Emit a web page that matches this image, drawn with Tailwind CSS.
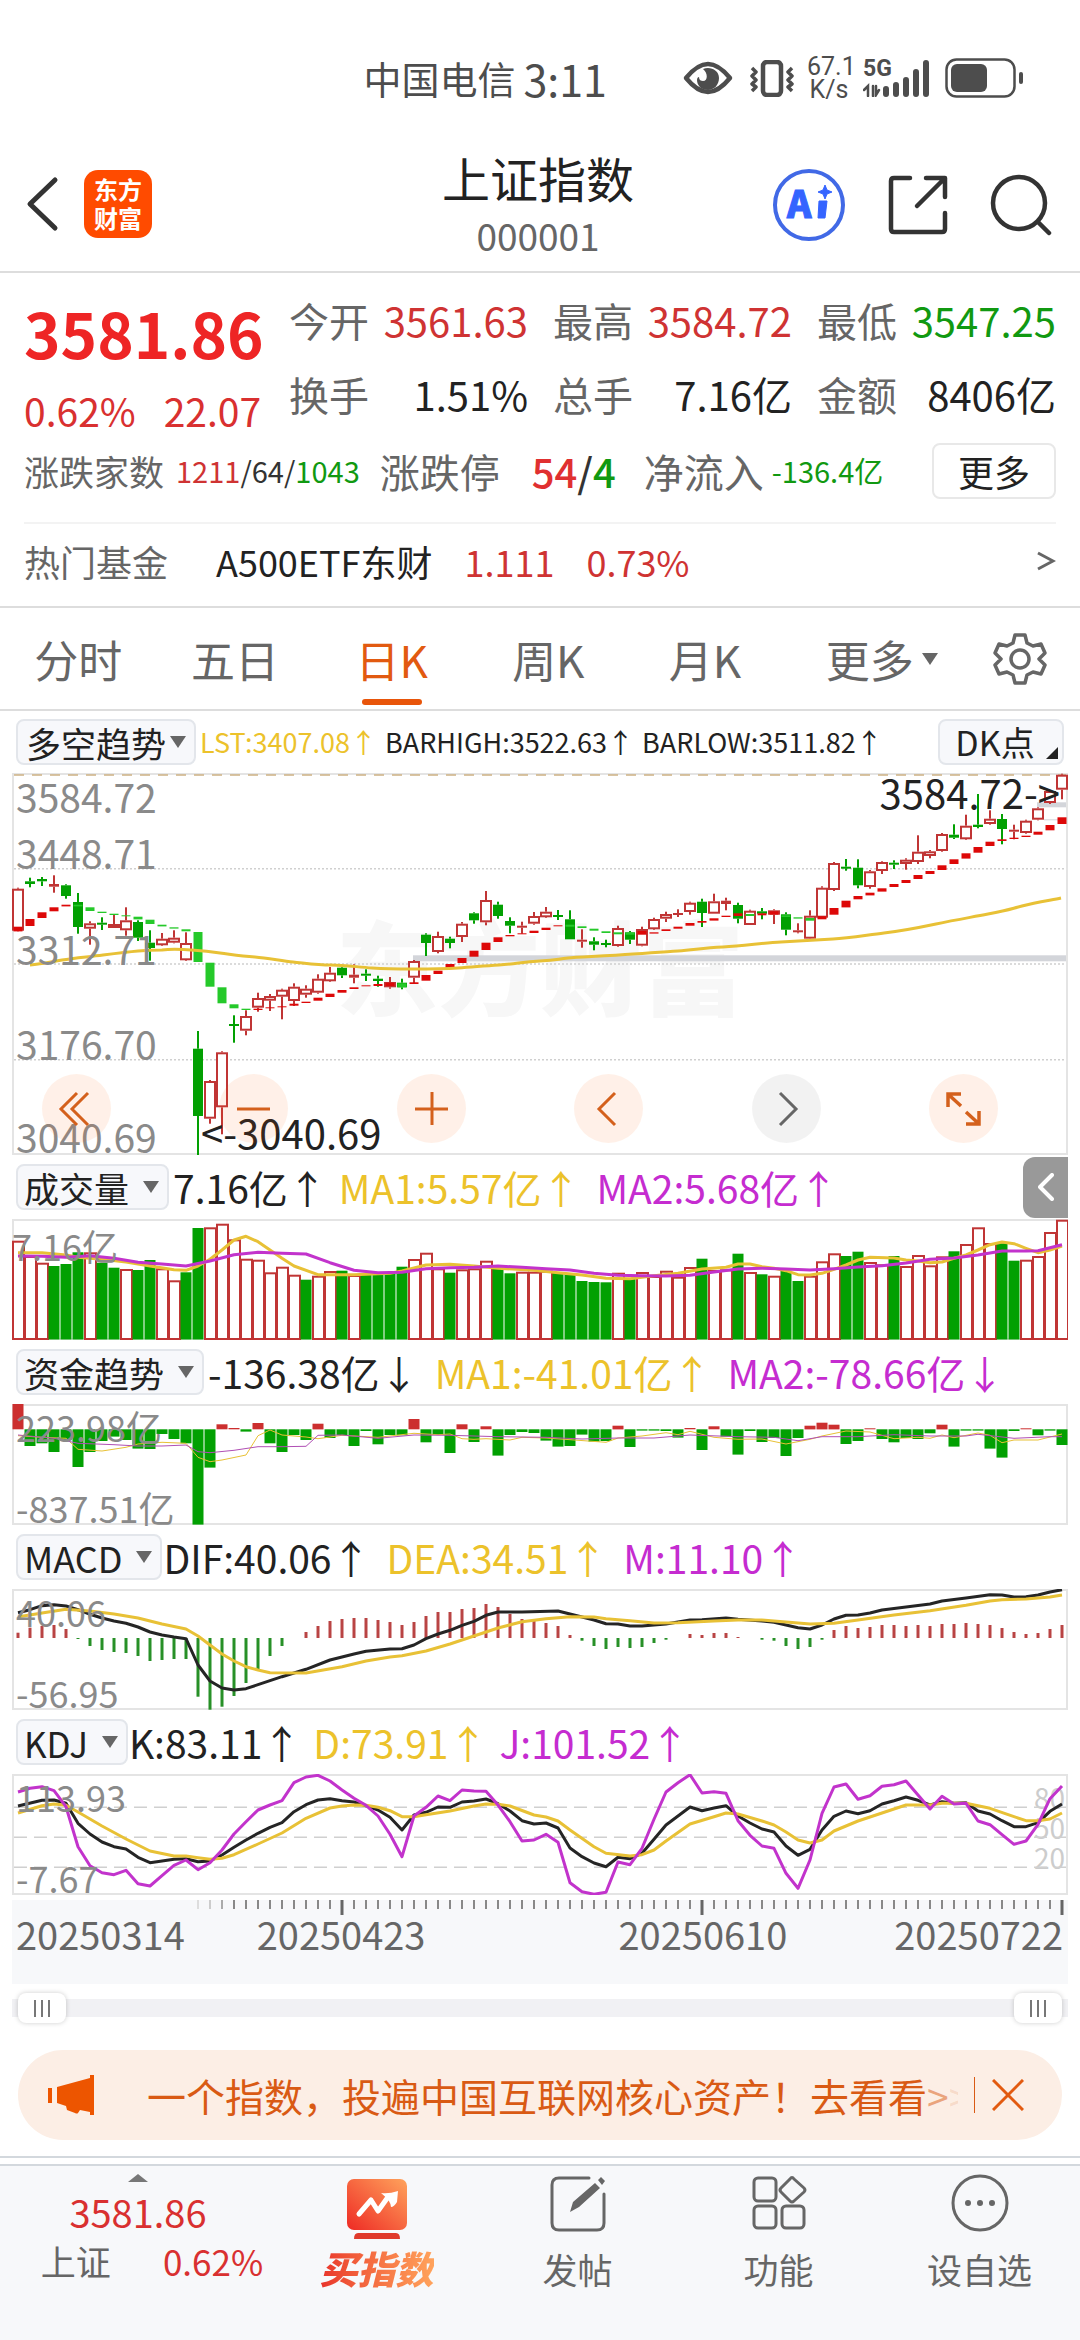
<!DOCTYPE html>
<html lang="zh-CN">
<head>
    <meta charset="UTF-8">
    <meta name="viewport" content="width=device-width, initial-scale=1.0">
    <title>上证指数 000001</title>
    <script src="https://cdn.jsdelivr.net/npm/@tailwindcss/browser@4"></script>
    <style>
        body { font-family: "Noto Sans CJK SC", "Noto Sans", sans-serif; }
    </style>
</head>
<body class="bg-white text-[#222] overflow-x-hidden">

    <!-- Status bar -->
    <div class="flex items-center justify-end h-[132px] pt-6 pr-[56px] text-[#4d4d4d]">
        <span class="text-[38px] leading-none mr-2">中国电信</span>
        <span class="text-[43px] leading-none mr-[76px]">3:11</span>
        <svg class="w-[50px] h-[34px] mr-4" viewBox="0 0 50 34" fill="none">
            <path d="M3 17C12 6 19 3 25 3s13 3 22 14c-9 11-16 14-22 14S12 28 3 17Z" stroke="currentColor" stroke-width="4.5" stroke-linejoin="round"/>
            <path d="M20 8c7-3 16 1 16 9 0 7-5 12-11 12-7 0-11-5-11-10 0-2 1-3 2-3 0 3 2 4 4 4 5 0 5-8 0-12Z" fill="currentColor"/>
        </svg>
        <svg class="w-[46px] h-[37px] mr-3" viewBox="0 0 46 37" fill="none" stroke="currentColor">
            <rect x="14" y="2" width="18" height="33" rx="4" stroke-width="4.5"/>
            <path d="M3 8l4 4-4 4 4 4-4 4 4 3-4 4M43 8l-4 4 4 4-4 4 4 4-4 3 4 4" stroke-width="3.5" stroke-linejoin="round"/>
        </svg>
        <div class="w-11 text-center text-[25px] leading-[23px] mr-3 font-[Roboto]">67.1<br>K/s</div>
        <div class="relative w-[66px] h-[38px] mr-4">
            <span class="absolute left-0 top-0 text-[23px] leading-5 font-bold font-[Roboto]">5G</span>
            <svg class="w-full h-full" viewBox="0 0 66 38" fill="none" stroke="currentColor" stroke-linecap="round">
                <path d="M23 30v5M33 26v9M43 21v14M53 13v22M63 4v31" stroke-width="6"/>
                <path d="M5 37V27l-4 4M10 27v10M13 27v9l3-5" stroke-width="2.5"/>
            </svg>
        </div>
        <svg class="w-[79px] h-10" viewBox="0 0 79 40" fill="none">
            <rect x="1.5" y="1.5" width="68" height="37" rx="10" stroke="currentColor" stroke-width="2.5"/>
            <rect x="6" y="6" width="36" height="28" rx="6" fill="currentColor"/>
            <path d="M76 16v8" stroke="currentColor" stroke-width="4" stroke-linecap="round"/>
        </svg>
    </div>

    <!-- Title bar -->
    <header class="grid grid-cols-[1fr_auto_1fr] items-center h-[141px] pl-6 pr-[28px] border-b-2 border-[#ddd]">
        <div class="flex items-center gap-6 pt-1">
            <button aria-label="返回"><svg class="w-9 h-[58px]" viewBox="0 0 36 58" fill="none" stroke="#333" stroke-width="5" stroke-linecap="round" stroke-linejoin="round"><path d="M31 5L6 29l25 24"/></svg></button>
            <a href="#" class="w-[68px] h-[68px] rounded-[14px] bg-[#ff4b00] text-white text-[24px] leading-[29px] font-bold text-center pt-1">东方<br>财富</a>
        </div>
        <div class="text-center pt-2">
            <h1 class="text-[48px] leading-[58px]">上证指数</h1>
            <p class="text-[37px] leading-[58px] text-[#666]">000001</p>
        </div>
        <div class="flex items-center justify-end gap-[42px] pt-[6px]">
            <button aria-label="AI"><svg class="w-[74px] h-[74px]" viewBox="0 0 74 74">
                <circle cx="37" cy="37" r="34" fill="none" stroke="#4169e6" stroke-width="4"/>
                <text x="15" y="50" font-size="37" font-weight="900" fill="#3564ff" stroke="#3564ff" stroke-width="1">A</text>
                <path d="M47 33h8l-2 17h-7ZM53 17l2 5 5 2-5 2-2 5-2-5-5-2 5-2Z" fill="#3564ff" stroke="#3564ff" stroke-linejoin="round"/>
            </svg></button>
            <button aria-label="分享"><svg class="w-[60px] h-[60px]" viewBox="0 0 60 60" fill="none" stroke="#333" stroke-width="4.5" stroke-linecap="round" stroke-linejoin="round">
                <path d="M22 3H6q-3 0-3 3v48q0 3 3 3h48q3 0 3-3V38M38 3h19v19M56 4L29 31"/>
            </svg></button>
            <button aria-label="搜索"><svg class="w-[62px] h-[62px]" viewBox="0 0 62 62" fill="none" stroke="#333" stroke-width="4.5" stroke-linecap="round">
                <circle cx="29" cy="29" r="26"/><path d="M48 48l11 11"/>
            </svg></button>
        </div>
    </header>

    <!-- Quote summary -->
    <section class="px-6 pt-[10px] border-b-2 border-[#ddd]">
        <div class="flex">
            <div class="w-[265px] text-[#d93030]">
                <div class="text-[62px] leading-[98px] font-bold text-[#ee2525]">3581.86</div>
                <div class="flex gap-7 text-[39px] leading-[58px]"><span>0.62%</span><span>22.07</span></div>
            </div>
            <dl class="flex-1 grid grid-cols-3 gap-x-[25px] content-start text-[40px] leading-[74px]">
                <div class="flex justify-between"><dt class="text-[#666]">今开</dt><dd class="text-[#cf3333]">3561.63</dd></div>
                <div class="flex justify-between"><dt class="text-[#666]">最高</dt><dd class="text-[#cf3333]">3584.72</dd></div>
                <div class="flex justify-between"><dt class="text-[#666]">最低</dt><dd class="text-[#119911]">3547.25</dd></div>
                <div class="flex justify-between"><dt class="text-[#666]">换手</dt><dd>1.51%</dd></div>
                <div class="flex justify-between"><dt class="text-[#666]">总手</dt><dd>7.16亿</dd></div>
                <div class="flex justify-between"><dt class="text-[#666]">金额</dt><dd>8406亿</dd></div>
            </dl>
        </div>
        <div class="flex items-center h-[64px] whitespace-nowrap text-[#666] text-[40px]">
            <span class="text-[35px]">涨跌家数</span>
            <span class="text-[29px] text-[#333] ml-3"><span class="text-[#cf3333]">1211</span>/64/<span class="text-[#119911]">1043</span></span>
            <span class="ml-5">涨跌停</span>
            <span class="ml-8 font-medium text-[#333]"><span class="text-[#e03030]">54</span>/<span class="text-[#119911]">4</span></span>
            <span class="ml-7">净流入</span>
            <span class="ml-2 text-[29px] text-[#119911]">-136.4亿</span>
            <button class="ml-auto w-[124px] h-[56px] border-2 border-[#e8e8e8] rounded-lg text-[36px] leading-none text-[#222]">更多</button>
        </div>
        <a href="#" class="flex items-center h-[84px] pb-2 border-t-2 border-[#f3f3f3] mt-[19px] text-[36px]">
            <span class="text-[#666]">热门基金</span>
            <span class="ml-12">A500ETF东财</span>
            <span class="ml-8 text-[#cf3333]">1.111</span>
            <span class="ml-8 text-[#cf3333]">0.73%</span>
            <svg class="ml-auto w-5 h-5" viewBox="0 0 20 20" fill="none" stroke="#666" stroke-width="3"><path d="M2 2l15 8-15 8"/></svg>
        </a>
    </section>

    <!-- Period tabs -->
    <nav class="flex items-center h-[103px] border-b-2 border-[#ddd] text-[44px] leading-none text-[#666]">
        <button class="flex-1">分时</button>
        <button class="flex-1">五日</button>
        <button class="flex-1 relative text-[#e25a10]">日K<span class="absolute left-1/2 -translate-x-1/2 -bottom-6 w-[60px] h-[6px] rounded-full bg-[#e8550a]"></span></button>
        <button class="flex-1">周K</button>
        <button class="flex-1">月K</button>
        <button class="flex-1 flex items-center justify-center gap-2 pl-5">更多<svg class="w-4 h-3" viewBox="0 0 16 12" fill="#666"><path d="M0 0h16L8 12Z"/></svg></button>
        <button class="w-[120px] flex justify-center" aria-label="设置"><svg class="w-[54px] h-[54px]" viewBox="0 0 54 54" fill="none" stroke="#666" stroke-width="3.5" stroke-linejoin="round">
            <path d="M22 3h10l2 8 6 3 8-2 4 9-6 6 6 6-4 9-8-2-6 3-2 8H22l-2-8-6-3-8 2-4-9 6-6-6-6 4-9 8 2 6-3Z"/>
            <circle cx="27" cy="27" r="9"/>
        </svg></button>
    </nav>

    <main class="px-3">
        <!-- Trend / candles -->
        <div class="flex items-center h-[62px] px-1 text-[27px] whitespace-nowrap">
            <button class="flex items-center gap-1 h-[46px] px-2 rounded-lg border-2 border-[#e3e6eb] bg-[#f7f8fb] text-[35px] leading-none">多空趋势<svg class="w-4 h-3" viewBox="0 0 16 12" fill="#666"><path d="M0 0h16L8 12Z"/></svg></button>
            <span class="ml-1 text-[#ecc22b]">LST:3407.08↑</span>
            <span class="ml-2">BARHIGH:3522.63↑</span>
            <span class="ml-2">BARLOW:3511.82↑</span>
            <button class="relative ml-auto w-[126px] h-[46px] pr-3 rounded-lg border-2 border-[#e3e6eb] bg-[#f7f8fb] text-[34px] leading-none">DK点<svg class="absolute right-1 bottom-1 w-3 h-3" viewBox="0 0 12 12" fill="#222"><path d="M12 0v12H0Z"/></svg></button>
        </div>
        <div class="relative text-[39px] leading-[38px] text-[#8a8a8a]">
            <div class="absolute inset-0 flex items-center justify-center text-[102px] font-black text-[#f7f7f7]">东方财富</div>
            <svg id="candles" class="relative block w-full h-[382px]" viewBox="0 0 1056 382" preserveAspectRatio="none"></svg>
            <span class="absolute left-1 top-1">3584.72</span>
            <span class="absolute left-1 top-[60px]">3448.71</span>
            <span class="absolute left-1 top-[156px]">3312.71</span>
            <span class="absolute left-1 top-[251px]">3176.70</span>
            <span class="absolute left-1 bottom-0">3040.69</span>
            <span class="absolute left-[189px] bottom-1 text-[40px] text-[#222]">&lt;-3040.69</span>
            <span class="absolute right-2 top-0 text-[40px] text-[#222]">3584.72-&gt;</span>
            <div class="absolute inset-x-[30px] bottom-3 flex justify-between pr-10">
                <button class="w-[69px] h-[69px] rounded-full bg-[#ff5a00]/9" aria-label="最早"><svg viewBox="0 0 69 69" fill="none" stroke="#d4601c" stroke-width="3"><path d="M35 19L19 35l16 16M46 19L30 35l16 16"/></svg></button>
                <button class="w-[69px] h-[69px] rounded-full bg-[#ff5a00]/9" aria-label="缩小"><svg viewBox="0 0 69 69" fill="none" stroke="#d4601c" stroke-width="3"><path d="M18 35h33"/></svg></button>
                <button class="w-[69px] h-[69px] rounded-full bg-[#ff5a00]/9" aria-label="放大"><svg viewBox="0 0 69 69" fill="none" stroke="#d4601c" stroke-width="3"><path d="M18 35h33M35 18v33"/></svg></button>
                <button class="w-[69px] h-[69px] rounded-full bg-[#ff5a00]/9" aria-label="向左"><svg viewBox="0 0 69 69" fill="none" stroke="#d4601c" stroke-width="3"><path d="M41 19L25 35l16 16"/></svg></button>
                <button class="w-[69px] h-[69px] rounded-full bg-black/5" aria-label="向右"><svg viewBox="0 0 69 69" fill="none" stroke="#666" stroke-width="3"><path d="M28 19l16 16-16 16"/></svg></button>
                <button class="w-[69px] h-[69px] rounded-full bg-[#ff5a00]/9" aria-label="全屏"><svg viewBox="0 0 69 69" fill="none" stroke="#d4601c" stroke-width="3.5"><path d="M19 33V20h13M20 21l12 11M50 37v13H37M49 49L37 38"/></svg></button>
            </div>
        </div>

        <!-- Volume -->
        <div class="flex items-center h-16 pl-1 text-[39px] whitespace-nowrap">
            <button class="flex items-center gap-[14px] h-[46px] pl-[6px] pr-2 rounded-lg border-2 border-[#e3e6eb] bg-[#f7f8fb] text-[35px] leading-none">成交量<svg class="w-4 h-3" viewBox="0 0 16 12" fill="#666"><path d="M0 0h16L8 12Z"/></svg></button>
            <span class="ml-1">7.16亿↑</span>
            <span class="ml-3 text-[#ecc22b]">MA1:5.57亿↑</span>
            <span class="ml-4 text-[#c52cd0]">MA2:5.68亿↑</span>
            <button class="ml-auto w-[45px] h-[61px] rounded-l-xl bg-[#999] flex items-center justify-center" aria-label="展开"><svg class="w-4 h-7" viewBox="0 0 16 28" fill="none" stroke="#fff" stroke-width="4" stroke-linecap="round" stroke-linejoin="round"><path d="M14 2L2 14l12 12"/></svg></button>
        </div>
        <div class="relative text-[36px] leading-9 text-[#8a8a8a]">
            <svg id="volume" class="block w-full h-[121px]" viewBox="0 0 1056 121" preserveAspectRatio="none"></svg>
            <span class="absolute left-0 top-2">7.16亿</span>
        </div>

        <!-- Money flow -->
        <div class="flex items-center h-16 pl-1 text-[39px] whitespace-nowrap">
            <button class="flex items-center gap-[14px] h-[46px] pl-[6px] pr-2 rounded-lg border-2 border-[#e3e6eb] bg-[#f7f8fb] text-[35px] leading-none">资金趋势<svg class="w-4 h-3" viewBox="0 0 16 12" fill="#666"><path d="M0 0h16L8 12Z"/></svg></button>
            <span class="ml-1">-136.38亿↓</span>
            <span class="ml-4 text-[#ecc22b]">MA1:-41.01亿↑</span>
            <span class="ml-4 text-[#c52cd0]">MA2:-78.66亿↓</span>
        </div>
        <div class="relative text-[36px] leading-9 text-[#8a8a8a]">
            <svg id="funds" class="block w-full h-[121px]" viewBox="0 0 1056 121" preserveAspectRatio="none"></svg>
            <span class="absolute left-1 top-1">223.98亿</span>
            <span class="absolute left-1 bottom-0">-837.51亿</span>
        </div>

        <!-- MACD -->
        <div class="flex items-center h-16 pl-1 text-[39px] whitespace-nowrap">
            <button class="flex items-center gap-[14px] h-[46px] pl-[6px] pr-2 rounded-lg border-2 border-[#e3e6eb] bg-[#f7f8fb] text-[36px] leading-none">MACD<svg class="w-4 h-3" viewBox="0 0 16 12" fill="#666"><path d="M0 0h16L8 12Z"/></svg></button>
            <span class="ml-px">DIF:40.06↑</span>
            <span class="ml-4 text-[#ecc22b]">DEA:34.51↑</span>
            <span class="ml-4 text-[#c52cd0]">M:11.10↑</span>
        </div>
        <div class="relative text-[36px] leading-9 text-[#8a8a8a]">
            <svg id="macd" class="block w-full h-[121px]" viewBox="0 0 1056 121" preserveAspectRatio="none"></svg>
            <span class="absolute left-1 top-1">40.06</span>
            <span class="absolute left-1 bottom-0">-56.95</span>
        </div>

        <!-- KDJ -->
        <div class="flex items-center h-16 pl-1 text-[39px] whitespace-nowrap">
            <button class="flex items-center gap-[14px] h-[46px] pl-[6px] pr-2 rounded-lg border-2 border-[#e3e6eb] bg-[#f7f8fb] text-[35px] leading-none">KDJ<svg class="w-4 h-3" viewBox="0 0 16 12" fill="#666"><path d="M0 0h16L8 12Z"/></svg></button>
            <span class="ml-px">K:83.11↑</span>
            <span class="ml-3 text-[#ecc22b]">D:73.91↑</span>
            <span class="ml-3 text-[#c52cd0]">J:101.52↑</span>
        </div>
        <div class="relative text-[36px] leading-9 text-[#8a8a8a]">
            <div class="absolute right-[3px] top-2 flex flex-col text-[28px] leading-[30px] text-[#ccc]"><span>80</span><span>50</span><span>20</span></div>
            <svg id="kdj" class="relative block w-full h-[121px]" viewBox="0 0 1056 121" preserveAspectRatio="none"></svg>
            <span class="absolute left-1 top-1">113.93</span>
            <span class="absolute left-1 bottom-0">-7.67</span>
        </div>

        <!-- Time axis -->
        <div class="mt-[5px] h-[84px] bg-[#f7f8fa]">
            <svg id="axis" class="block w-full h-[15px]" viewBox="0 0 1056 15" preserveAspectRatio="none"></svg>
            <div class="flex pl-1 pr-[5px] text-[38px] leading-[38px] text-[#666]">
                <span>20250314</span><span class="ml-[72px]">20250423</span><span class="ml-auto">20250610</span><span class="ml-[107px]">20250722</span>
            </div>
        </div>

        <!-- Range slider -->
        <div class="grid items-center h-12 bg-[linear-gradient(#f1f1f4,#f1f1f4)] bg-[size:100%_18px] bg-no-repeat bg-center px-[6px]">
            <input type="range" min="0" max="87" value="0" aria-label="起始日期" class="block col-start-1 row-start-1 w-full h-[30px] appearance-none bg-transparent pointer-events-none [&::-webkit-slider-thumb]:pointer-events-auto [&::-webkit-slider-thumb]:appearance-none [&::-webkit-slider-thumb]:w-12 [&::-webkit-slider-thumb]:h-[30px] [&::-webkit-slider-thumb]:rounded-lg [&::-webkit-slider-thumb]:bg-white [&::-webkit-slider-thumb]:shadow-[0_0_5px_rgba(0,0,0,0.2)] [&::-webkit-slider-thumb]:bg-[repeating-linear-gradient(90deg,#777_0px,#777_2px,#fff_2px,#fff_7px)] [&::-webkit-slider-thumb]:bg-[size:16px_17px] [&::-webkit-slider-thumb]:bg-no-repeat [&::-webkit-slider-thumb]:bg-center">
            <input type="range" min="0" max="87" value="87" aria-label="结束日期" class="block col-start-1 row-start-1 w-full h-[30px] appearance-none bg-transparent pointer-events-none [&::-webkit-slider-thumb]:pointer-events-auto [&::-webkit-slider-thumb]:appearance-none [&::-webkit-slider-thumb]:w-12 [&::-webkit-slider-thumb]:h-[30px] [&::-webkit-slider-thumb]:rounded-lg [&::-webkit-slider-thumb]:bg-white [&::-webkit-slider-thumb]:shadow-[0_0_5px_rgba(0,0,0,0.2)] [&::-webkit-slider-thumb]:bg-[repeating-linear-gradient(90deg,#777_0px,#777_2px,#fff_2px,#fff_7px)] [&::-webkit-slider-thumb]:bg-[size:16px_17px] [&::-webkit-slider-thumb]:bg-no-repeat [&::-webkit-slider-thumb]:bg-center">
        </div>

        <!-- Promo -->
        <div class="flex items-center h-[90px] mt-[18px] mx-[6px] pl-[29px] pr-[38px] rounded-full bg-[#fceee5] text-[#d95a14] text-[39px] whitespace-nowrap">
            <svg class="w-[47px] h-10 shrink-0" viewBox="0 0 47 40" fill="#ed5500"><path d="M1 13h4v15H1ZM10 12L43 3V0h4v40h-4v-3l-10-2-2 3q-1 1-3 0l-8-3-1-4-9-3Z"/></svg>
            <a href="#" class="ml-[53px] mr-4 flex-1 min-w-0 overflow-hidden">一个指数，投遍中国互联网核心资产！去看看<span class="text-[#d95a14]/50">&gt;</span><span class="text-[#d95a14]/15">&gt;</span></a>
            <span class="w-px h-9 bg-[#d95a14] mr-[17px]"></span>
            <button aria-label="关闭"><svg class="w-8 h-8" viewBox="0 0 32 32" fill="none" stroke="#e25a10" stroke-width="3"><path d="M1 1l30 30M31 1L1 31"/></svg></button>
        </div>
    </main>

    <!-- Bottom bar -->
    <footer class="mt-4 pt-[6px] border-t-2 border-[#d3d8dd]">
        <div class="grid grid-cols-[276fr_201fr_201fr_201fr_201fr] h-[176px] pt-2 border-t-2 border-[#d3d8dd] bg-[#f7f8fa] text-[35px] leading-[42px] text-[#666]">
            <a href="#" class="flex flex-col items-center">
                <svg class="w-5 h-2" viewBox="0 0 20 8" fill="#777"><path d="M10 0l10 8H0Z"/></svg>
                <span class="mt-[6px] text-[38px] leading-[48px] text-[#d93030]">3581.86</span>
                <span class="flex gap-[52px] pl-7 leading-[50px]">上证<span class="text-[#d93030]">0.62%</span></span>
            </a>
            <a href="#" class="flex flex-col items-center">
                <svg class="w-[62px] h-[62px] mt-1" viewBox="0 0 62 62" fill="none">
                    <defs><linearGradient id="hot" x1="0" y1="1" x2="1" y2="0"><stop offset="0" stop-color="#ee2a24"/><stop offset="1" stop-color="#ffa35c"/></linearGradient></defs>
                    <rect x="1" y="1" width="60" height="51" rx="7" fill="url(#hot)"/>
                    <path d="M13 36l12-14 7 11 10-14" stroke="#fff" stroke-width="5" stroke-linejoin="round" stroke-linecap="round"/>
                    <path d="M35 15q8 1 17-2l-1 11q-3 5-6 5 0-6-10-14Z" fill="#fff"/>
                    <path d="M12 55h38q4 0 4 6H8q0-6 4-6Z" fill="#e03a2c"/>
                </svg>
                <span class="mt-[7px] text-[38px] font-black italic text-transparent bg-clip-text bg-linear-to-r from-[#e8302a] to-[#ffa35c]">买指数</span>
            </a>
            <a href="#" class="flex flex-col items-center">
                <svg class="w-[58px] h-[58px]" viewBox="0 0 58 58" fill="none" stroke="#666" stroke-width="3">
                    <path d="M40 4H10q-7 0-7 7v38q0 7 7 7h38q7 0 7-7V20" stroke-linecap="round"/>
                    <path d="M21 38l3-10L46 9l5 5-21 19ZM49 6l3-3 4 4-3 4Z" fill="#666" stroke="none"/>
                </svg>
                <span class="mt-4">发帖</span>
            </a>
            <a href="#" class="flex flex-col items-center">
                <svg class="w-[58px] h-[58px]" viewBox="-2 -2 58 58" fill="none" stroke="#666" stroke-width="3" stroke-linejoin="round">
                    <rect x="2" y="2" width="22" height="23" rx="4"/><rect x="2" y="30" width="22" height="22" rx="4"/><rect x="30" y="30" width="22" height="22" rx="4"/>
                    <path d="M38 3q2-3 4 0l10 9q2 2 0 4l-10 9q-2 2-4 0l-9-9q-2-2 0-4Z"/>
                </svg>
                <span class="mt-4">功能</span>
            </a>
            <a href="#" class="flex flex-col items-center">
                <svg class="w-[58px] h-[58px]" viewBox="0 0 58 58" fill="none" stroke="#666" stroke-width="3">
                    <circle cx="29" cy="29" r="27"/>
                    <g fill="#666" stroke="none"><circle cx="17" cy="29" r="3"/><circle cx="29" cy="29" r="3"/><circle cx="41" cy="29" r="3"/></g>
                </svg>
                <span class="mt-4">设自选</span>
            </a>
        </div>
    </footer>

    <script>
        const RED = '#c03535', GREEN = '#02a002', GOLD = '#e8c136', PURPLE = '#c233cc', INK = '#252525';
        const x = i => 6 + i * 12;
        // y readings are taken at three units per pixel, counted from the panel's own top
        const scale = top => v => ((v - top) / 3).toFixed(1);
        const rect = (l, t, w, h, fill) => `<rect x="${l}" y="${t}" width="${w}" height="${h}" fill="${fill}"/>`;
        const frame = h => `<rect x="1" y="1" width="1054" height="${h - 2}" fill="none" stroke="#e4e4e4" stroke-width="2"/>`;
        const line = (pts, y, color, w) => `<polyline fill="none" stroke="${color}" stroke-width="${w}" stroke-linejoin="round" points="${pts.map(p => x(p[0]) + ',' + y(p[1])).join(' ')}"/>`;
        const parse = s => s.trim().split(/\s*,\s*/).map(p => p.split(' ').map(Number));
        const dash = (yy, color, pattern) => `<path d="M2 ${yy}H1054" stroke="${color}" stroke-width="1.5" stroke-dasharray="${pattern}"/>`;

        // colour high open/close-top open/close-bottom low
        const candles = `r 385 388 514 516,g 355 366 374 384,g 353 359 366 380,r 348 374 382 400,g 375 378 410 418,g 401 428 503 523,r 486 492 508 556,g 474 490 496 512,r 467 494 506 506,r 444 483 513 529,g 483 488 535 545,g 513 550 566 604,r 521 538 558 560,r 513 535 550 552,r 519 551 603 605,g 815 868 1070 1188,r 962 965 1078 1093,r 876 879 1044 1125,g 768 794 800 850,r 753 770 814 828,r 700 716 745 757,r 704 710 724 755,r 688 691 712 780,r 672 682 725 740,r 678 688 706 715,r 645 658 700 703,r 623 640 666 668,g 620 625 648 656,r 615 646 655 672,g 630 643 649 665,g 649 658 665 682,r 653 668 684 688,g 658 670 684 690,r 602 605 655 672,g 522 526 551 590,r 517 530 578 582,g 532 538 551 567,r 488 493 533 548,g 459 462 483 493,r 395 422 489 498,g 427 436 470 478,g 474 485 499 522,r 487 499 505 523,r 458 470 493 496,r 443 457 474 476,g 452 467 472 482,g 453 480 540 540,r 510 541 547 565,g 534 546 556 573,g 541 551 556 564,r 499 506 560 562,g 515 519 541 554,r 502 509 559 561,r 475 479 510 512,r 457 464 478 488,r 450 461 465 473,r 427 430 458 466,g 418 427 461 503,r 403 426 463 463,r 415 424 434 453,g 430 437 478 492,r 451 454 497 497,g 446 456 463 480,r 450 453 466 494,g 459 465 511 528,r 492 513 519 522,r 453 469 538 540,r 381 385 475 478,r 308 311 392 395,g 299 322 327 334,g 300 325 378 387,r 332 336 383 388,r 306 308 335 344,g 303 310 316 329,r 297 301 314 331,r 228 277 308 314,r 272 276 290 297,r 221 224 275 277,g 195 226 235 239,r 166 199 240 242,g 104 196 203 207,r 153 178 194 196,g 164 179 209 255,r 196 211 217 240,r 181 184 221 223,r 144 147 181 183,r 92 95 131 134,r 43 46 91 120`.split(',').map(s => s.split(' '));
        // bull/bear steps: top bottom
        const steps = parse(`502 516,479 500,459 476,444 456,436 441,436 441,444 455,457 461,463 467,468 471,472 480,481 494,496 501,504 508,510 516,518 608,610 682,684 732,735 747,748 752,748 752,744 747,741 744,733 739,727 731,715 724,703 713,692 700,684 689,678 681,674 680,670 680,672 684,669 674,647 664,634 644,614 626,596 611,574 592,550 572,534 548,527 531,522 525,514 521,505 512,498 501,496 502,501 506,508 514,516 521,519 525,520 526,515 526,519 523,510 515,502 508,491 499,485 490,477 484,469 473,462 470,464 470,462 468,456 466,468 473,474 478,476 484,471 480,446 466,424 444,410 420,400 408,387 397,374 383,362 371,347 359,335 344,318 332,300 314,282 298,263 280,247 260,240 245,235 239,229 233,217 226,197 213,174 194`);
        const bearish = i => (i > 4 && i < 20) || i === 32 || (i > 45 && i < 52) || i === 61 || (i > 63 && i < 67);

        function drawCandles() {
            const y = scale(41);
            let s = frame(382);
            s += [328, 614, 901].map(v => dash(y(v), '#d0d0d0', '2 2')).join('');
            s += dash(2, '#cdb184', '10 8');
            s += rect(401, y(588), 653, 6, '#d3d5da') + rect(1025, y(129), 29, 5, '#d3d5da') + rect(1032, y(180), 22, 1, '#d3d5da');
            candles.forEach(([c, ...v], i) => {
                const [hi, a, b, lo] = v.map(y), h = Math.max(b - a, 2), color = c === 'g' ? GREEN : RED;
                s += rect(x(i) - 1, hi, 2, Math.max(a - hi, 0), color) + rect(x(i) - 1, b, 2, Math.max(lo - b, 0), color);
                if (c === 'g' || h < 4) s += rect(x(i) - 5, a, 10, h, color);
                else s += `<rect x="${x(i) - 5}" y="${+a + 1}" width="10" height="${h - 2}" fill="#fff" stroke="${color}" stroke-width="2"/>`;
            });
            steps.forEach(([a, b], i) => s += rect(x(i) - 4.5, y(a), 9, ((b - a) / 3).toFixed(1), bearish(i) ? '#25c92a' : '#dd0808'));
            s += `<path fill="none" stroke="${GOLD}" stroke-width="3" d="M18 192C30 191 38 189 50 187S75 184 91 182S115 179 126 178S140 177 150 177C165 175 185 177 208 180S230 183 243 184S270 188 281 189S305 192 319 192S345 194 360 195S385 196 401 196S430 196 446 195S470 193 487 192S510 189 528 188S545 186 556 185S595 183 621 181S650 179 666 178S690 175 711 174S750 170 769 169S805 167 821 166S855 162 872 160S905 155 924 151S955 145 976 141S995 137 1010 133S1040 127 1049 125"/>`;
            document.getElementById('candles').innerHTML = s;
        }

        const volume = `r272 r318 r338 g348 g342 g307 r307 g338 g353 r357 g360 g330 r355 r391 g367 g234 r232 r221 r268 r326 r329 r367 r350 r374 g389 r377 r363 g362 r375 g370 g372 g372 g350 r327 r308 r355 g368 r358 r355 r332 g357 g370 r365 r365 r362 g366 g370 g393 g396 g397 r368 g385 r366 r378 r362 r380 r351 g326 r360 r358 g311 r366 g373 r377 g362 g393 r377 r334 r310 g318 g305 r336 r343 g318 r348 r315 r346 r319 g304 r282 r232 r279 g280 g332 r329 r318 r246 r209`.split(' ');
        function drawVolume() {
            const y = scale(207);
            let s = frame(121);
            volume.forEach((d, i) => {
                const t = +y(+d.slice(1));
                s += d[0] === 'g' ? rect(x(i) - 5.5, t, 11, 120.5 - t, GREEN)
                    : `<rect x="${x(i) - 5}" y="${t + 1}" width="11" height="${119 - t}" fill="#fff" stroke="${RED}" stroke-width="2"/>`;
            });
            s += line(parse('0 308,2 308,4 315,5 322,7 328,9 336,11 348,13 359,14 361,15 348,16 328,17 300,18 270,19 259,20 275,21 300,22 325,23 348,25 374,28 374,31 370,32 363,34 345,36 343,38 348,40 355,43 361,45 368,47 375,49 385,51 386,53 377,55 370,57 357,59 352,60 342,61 342,62 350,63 355,64 362,65 374,66 375,67 370,68 358,69 345,70 330,71 322,73 324,74 330,75 333,76 338,77 336,78 325,79 315,80 300,81 284,82 276,83 281,84 295,85 308,86 300,87 288'), y, GOLD, 3);
            s += line(parse('0 318,2 319,4 322,6 317,8 325,10 337,12 342,14 348,16 333,18 314,20 307,22 310,24 312,26 338,28 361,30 368,32 367,34 356,36 353,38 352,40 348,42 352,44 356,46 360,48 370,50 376,52 377,54 378,56 376,58 366,60 357,62 355,64 357,66 360,68 356,70 351,72 347,74 339,76 328,78 324,80 315,82 303,84 303,85 302,86 293,87 284'), y, PURPLE, 3);
            document.getElementById('volume').innerHTML = s;
        }

        const funds = [762,888,880,906,870,951,906,873,860,870,896,897,852,867,880,1124,953,823,834,845,819,880,906,855,870,821,864,855,888,843,883,855,856,807,877,855,909,823,876,829,917,855,846,849,872,890,888,854,875,873,827,891,842,842,843,863,834,900,829,860,914,843,876,864,918,864,827,818,824,882,873,835,867,877,864,867,850,824,890,842,842,896,923,843,835,856,842,885];
        function drawFunds() {
            const y = scale(762);
            let s = frame(121);
            funds.forEach((v, i) => s += rect(x(i) - 5.5, y(Math.min(v, 838)), 11, Math.max(Math.abs(v - 838) / 3, 1).toFixed(1), v < 838 ? '#cc2f2f' : GREEN));
            s += line(parse('0 857,2 862,4 865,5 898,7 903,9 892,10 882,12 877,14 880,15 922,16 935,17 930,19 915,20 857,21 840,22 855,24 861,25 866,27 856,30 862,33 850,35 854,36 852,37 866,38 868,39 866,41 870,42 862,44 864,46 869,49 877,50 864,52 858,54 848,55 854,56 844,58 862,60 868,62 867,64 882,66 868,67 858,69 843,71 846,73 866,75 862,76 865,77 855,78 863,80 849,81 856,82 878,83 870,85 870,87 852'), y, GOLD, 1);
            s += line(parse('0 855,3 865,5 880,8 884,10 888,12 888,14 885,15 905,16 908,18 901,20 890,22 890,24 889,25 856,27 855,30 865,33 855,36 856,40 860,44 862,47 867,50 864,53 864,56 855,60 860,63 862,65 872,67 860,70 860,73 854,76 858,79 858,80 853,83 865,86 860,87 860'), y, '#b04fb4', 1);
            document.getElementById('funds').innerHTML = s;
        }

        const macd = [338,323,318,315,327,357,378,390,396,399,408,423,420,417,417,530,569,560,528,489,447,408,378,354,336,318,303,297,294,294,300,306,315,306,288,276,276,267,264,252,261,282,297,303,309,318,345,362,378,387,381,384,381,369,359,354,342,345,339,339,351,354,359,362,378,387,381,359,330,318,324,321,315,315,318,315,318,312,312,309,312,315,324,336,342,339,327,315];
        function drawMacd() {
            const y = scale(207);
            let s = frame(121);
            macd.forEach((v, i) => s += rect(x(i) - 1.5, y(Math.min(v, 354)), 3, (Math.abs(v - 354) / 3).toFixed(1), v < 354 ? '#b94444' : '#279027'));
            s += line(parse('0 278,1 269,2 257,3 254,4 258,5 269,6 283,7 294,8 303,9 310,10 321,11 336,12 345,13 351,14 356,15 435,16 483,17 504,18 510,19 506,20 494,22 470,24 448,26 420,28 402,29 394,31 387,32 386,33 375,34 356,35 342,36 331,37 316,38 304,39 286,40 276,42 276,45 273,46 282,48 300,49 311,50 312,51 318,52 318,54 312,56 300,57 299,59 294,60 298,62 303,63 307,65 323,66 327,67 315,68 297,69 286,70 285,71 279,72 270,74 261,76 252,77 243,79 234,81 224,82 225,83 231,84 230,85 225,86 216,87 209'), y, INK, 3);
            s += line(parse('0 290,1 285,2 279,4 268,6 273,8 282,10 294,12 312,14 327,15 348,16 375,17 402,18 423,19 440,20 450,21 458,24 459,27 440,29 423,31 411,32 407,34 393,36 372,38 348,39 336,40 324,42 305,44 296,46 290,48 291,49 296,51 302,53 309,55 308,58 303,60 300,62 300,64 306,66 312,68 310,70 300,73 285,76 272,79 256,81 243,82 239,84 237,86 231,87 225'), y, GOLD, 3);
            document.getElementById('macd').innerHTML = s;
        }

        function drawKdj() {
            const y = scale(762);
            let s = frame(121) + [862, 952, 1042].map(v => dash(y(v), '#d0d0d0', '13 7')).join('');
            s += line(parse('0 858,2 841,3 840,4 850,5 910,6 942,7 966,8 980,9 987,10 1012,11 1028,12 1023,13 1018,14 1016,15 1025,16 1023,17 1005,18 982,19 960,20 940,21 922,22 908,23 875,24 854,25 840,26 836,27 842,28 846,29 857,30 870,31 892,32 930,33 885,34 877,35 861,36 862,37 846,38 843,39 837,40 851,41 873,42 902,43 912,44 909,45 924,46 984,47 1010,48 1029,49 1040,50 1012,51 1016,52 1000,53 958,54 915,55 888,56 861,57 872,58 864,59 857,60 888,61 909,62 927,63 936,64 978,65 1006,66 988,67 930,68 889,69 873,70 881,71 872,72 852,73 842,74 831,75 841,76 855,77 845,78 850,79 848,80 873,81 882,82 902,83 920,84 920,85 908,86 874,87 852'), y, INK, 3);
            s += line(parse('0 879,2 857,3 852,4 856,5 876,7 918,9 957,11 993,13 1008,14 1008,15 1013,16 1018,17 1015,18 1004,20 972,22 939,24 895,26 864,27 858,28 855,29 856,30 862,31 872,32 890,33 890,34 884,36 873,38 858,39 852,40 853,41 858,43 885,44 891,45 903,46 930,48 980,49 1000,51 1008,52 1004,53 990,54 963,56 912,58 890,59 879,60 882,62 903,63 915,64 936,65 960,66 969,67 960,68 933,70 903,72 879,74 855,76 855,77 850,79 850,81 865,83 890,84 902,85 902,86 897,87 879'), y, GOLD, 3);
            s += line(parse('0 816,1 805,2 800,3 812,4 860,5 980,6 1037,7 1058,8 1064,9 1051,10 1091,11 1098,12 1067,13 1036,14 1020,15 1049,16 1028,17 990,18 942,19 905,20 870,21 855,22 842,23 788,24 771,25 766,26 783,27 810,28 835,29 856,30 888,31 943,32 1010,33 888,34 862,35 828,36 842,37 810,38 813,39 814,40 855,41 905,42 963,43 960,44 943,45 967,46 1088,47 1115,48 1123,49 1117,50 1026,51 1034,52 985,53 898,54 816,55 788,56 764,57 819,58 815,59 820,60 902,61 946,62 978,63 985,64 1060,65 1105,66 1020,67 880,68 801,69 792,70 838,71 827,72 799,73 794,74 783,75 825,76 867,77 829,78 852,79 850,80 903,81 914,82 944,83 973,84 963,85 913,86 836,87 798'), y, PURPLE, 3);
            document.getElementById('kdj').innerHTML = s;
        }

        function drawAxis() {
            let s = '';
            for (let i = 15; i < 88; i++) {
                const major = i % 30 === 27;
                const color = i < 16 ? '#ddd' : i < 17 ? '#ccc' : i < 18 ? '#aaa' : '#888';
                s += rect(x(i) - (major ? 1.5 : 1), 0, major ? 3 : 2, major ? 15 : 9, major ? '#666' : color);
            }
            document.getElementById('axis').innerHTML = s;
        }

        drawCandles();
        drawVolume();
        drawFunds();
        drawMacd();
        drawKdj();
        drawAxis();
    </script>
</body>
</html>
